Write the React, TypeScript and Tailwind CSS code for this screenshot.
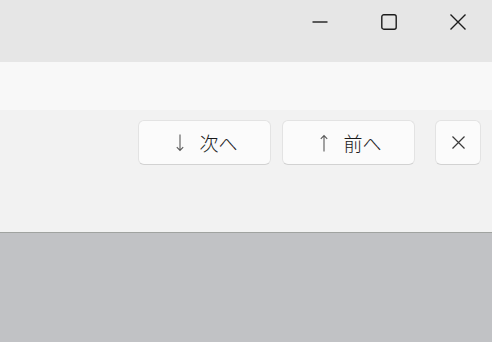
import React from "react";

const Arrow: React.FC<{ up?: boolean }> = ({ up }) => (
  <svg width="8" height="18" viewBox="0 0 8 18" className={up ? "rotate-180" : ""}>
    <path d="M4 0.5V16.5M0.8 13.2L4 16.5L7.2 13.2" fill="none" stroke="#5a5a5a" strokeWidth="1.1" />
  </svg>
);

const ToolButton: React.FC<{ up?: boolean; label: string }> = ({ up, label }) => (
  <button className="flex h-[45px] w-[133px] items-center justify-center gap-[15px] rounded-[6px] border border-[#e3e3e3] border-b-[#d2d2d2] bg-[#fbfbfb] pl-[5px] text-[19px] font-light text-[#1a1a1a]">
    <Arrow up={up} />
    <span className="leading-none">{label}</span>
  </button>
);

export default function App() {
  return (
    <div className="flex h-[342px] w-[492px] flex-col overflow-hidden font-['Noto_Sans_CJK_JP','Noto_Sans',sans-serif]">
      {/* title bar */}
      <div className="flex h-[62px] shrink-0 justify-end bg-[#e6e6e6]">
        <div className="flex h-[44px] w-[69px] items-center justify-center">
          <svg width="16" height="16" viewBox="0 0 16 16">
            <path d="M0.5 8H15.5" stroke="#1c1c1c" strokeWidth="1.4" />
          </svg>
        </div>
        <div className="flex h-[44px] w-[69px] items-center justify-center">
          <svg width="16" height="16" viewBox="0 0 16 16">
            <rect x="0.8" y="0.8" width="14.4" height="14.4" rx="2" fill="none" stroke="#1c1c1c" strokeWidth="1.4" />
          </svg>
        </div>
        <div className="flex h-[44px] w-[69px] items-center justify-center">
          <svg width="16" height="16" viewBox="0 0 16 16">
            <path d="M0.5 0.5L15.5 15.5M15.5 0.5L0.5 15.5" stroke="#1c1c1c" strokeWidth="1.4" />
          </svg>
        </div>
      </div>

      {/* light strip */}
      <div className="h-[48px] shrink-0 bg-[#f8f8f8]" />

      {/* find bar */}
      <div className="flex h-[123px] shrink-0 items-start justify-end gap-[11px] border-b border-[#a0a3a0] bg-[#f2f2f2] pr-[11px] pt-[10px]">
        <ToolButton label="次へ" />
        <ToolButton up label="前へ" />
        <button className="ml-[9px] flex h-[45px] w-[46px] items-center justify-center rounded-[6px] border border-[#e3e3e3] border-b-[#d2d2d2] bg-[#fbfbfb]">
          <svg width="13" height="13" viewBox="0 0 13 13">
            <path d="M0.5 0.5L12.5 12.5M12.5 0.5L0.5 12.5" stroke="#3a3a3a" strokeWidth="1.2" />
          </svg>
        </button>
      </div>

      <div className="flex-1 bg-[#c1c2c5]" />
    </div>
  );
}
